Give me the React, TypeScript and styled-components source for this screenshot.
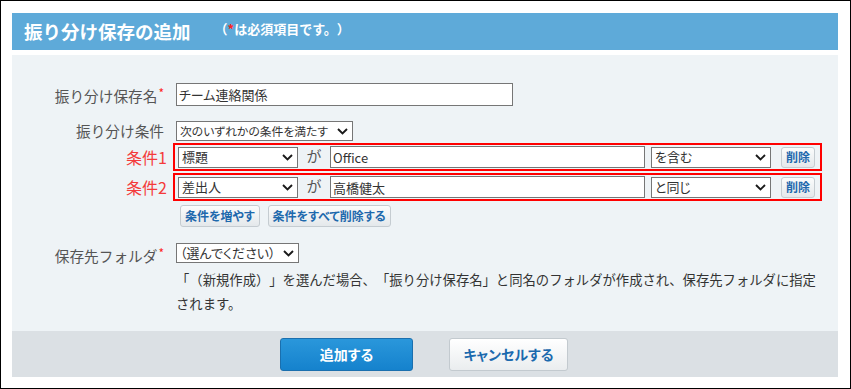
import React from "react";
import styled, { createGlobalStyle } from "styled-components";

const Global = createGlobalStyle`
  html, body { margin: 0; padding: 0; background: #fff; }
  body { font-family: "Noto Sans CJK JP", "Noto Sans", sans-serif; }
  *, *::before, *::after { box-sizing: border-box; }
`;

const Frame = styled.div`
  width: 851px;
  height: 389px;
  border: 1px solid #000;
  padding: 12px 12px 0 11px;
  background: #fff;
  display: flex;
  flex-direction: column;
`;

const Header = styled.div`
  height: 37px;
  background: #5eaad9;
  color: #fff;
  display: flex;
  align-items: center;
  padding-left: 12px;
`;

const Title = styled.h1`
  margin: 0;
  font-size: 18.5px;
  font-weight: 700;
  line-height: 1;
`;

const Note = styled.span`
  margin-left: 24px;
  font-size: 13px;
  font-weight: 700;
  line-height: 1;
  margin-top: -6px;
  text-spacing-trim: space-all;
`;

const Req = styled.span`
  color: #f22;
  font-weight: 700;
`;

const Panel = styled.div`
  margin-top: 5px;
  background: #eef3f6;
  height: 276px;
  padding-top: 28px;
  display: flex;
  flex-direction: column;
`;

const Row = styled.div<{ $mt?: number; $top?: boolean }>`
  display: flex;
  align-items: ${(p) => (p.$top ? "flex-start" : "center")};
  margin-top: ${(p) => p.$mt ?? 0}px;
`;

const Label = styled.div<{ $h?: number }>`
  width: 152px;
  margin-right: 12px;
  text-align: right;
  font-size: 14.67px;
  color: #555;
  line-height: ${(p) => (p.$h ? `${p.$h}px` : "20px")};
  white-space: nowrap;
`;

const Star = styled.span`
  color: #f22;
  font-size: 12px;
  vertical-align: 4px;
  margin-left: 1px;
`;

const CondLabel = styled.div`
  width: 155px;
  margin-right: 6px;
  text-align: right;
  font-size: 16px;
  color: #f43a3a;
  line-height: 20px;
`;

const TextInput = styled.input<{ $w?: number; $h?: number }>`
  width: ${(p) => (p.$w ? `${p.$w}px` : "auto")};
  flex: ${(p) => (p.$w ? "none" : "1")};
  min-width: 0;
  height: ${(p) => p.$h ?? 23}px;
  border: 1px solid #767676;
  background: #fff;
  padding: 0 2px;
  margin: 0;
  font-family: inherit;
  font-size: 13px;
  font-feature-settings: "palt";
  color: #333;
  outline: none;
`;

const SelectBox = styled.div<{ $w: number; $h: number; $fs?: number; $ml?: number }>`
  width: ${(p) => p.$w}px;
  height: ${(p) => p.$h}px;
  margin-left: ${(p) => p.$ml ?? 0}px;
  flex: none;
  border: 1px solid #767676;
  background: #fff;
  display: flex;
  align-items: center;
  justify-content: space-between;
  gap: 4px;
  padding: 0 4px 0 3px;
  font-size: ${(p) => p.$fs ?? 13}px;
  font-feature-settings: "palt";
  color: #333;
  white-space: nowrap;

  & > span {
    min-width: 0;
    line-height: 18px;
  }
  & > svg {
    flex: none;
  }
`;

const CondBox = styled.div`
  width: 649px;
  height: 28px;
  border: 2px solid #f00;
  padding: 0 5px 0 3px;
  display: flex;
  align-items: center;
`;

const Ga = styled.span`
  width: 32px;
  text-align: center;
  font-size: 15px;
  color: #555;
  line-height: 1;
  margin-top: -4px;
`;

const SmallButton = styled.button<{ $h?: number; $ml?: number }>`
  height: ${(p) => p.$h ?? 21}px;
  margin: 0 0 0 ${(p) => p.$ml ?? 0}px;
  padding: 0 4px;
  border: 1px solid #c5ccd1;
  border-radius: 3px;
  background: linear-gradient(#fbfcfc, #e4e8eb);
  color: #1e69ad;
  font-family: inherit;
  font-size: 12px;
  font-weight: 700;
  font-feature-settings: "palt";
  line-height: 1;
  white-space: nowrap;
  flex: none;
`;

const ButtonRow = styled.div`
  display: flex;
  gap: 8px;
  margin: 4px 0 0 168px;
`;

const Col = styled.div`
  display: flex;
  flex-direction: column;
`;

const Desc = styled.p`
  margin: 5px 0 0;
  width: 646px;
  font-size: 13.33px;
  line-height: 24px;
  color: #333;
  text-spacing-trim: space-all;
`;

const Footer = styled.div`
  height: 46px;
  background: #dbe0e4;
  display: flex;
  align-items: center;
  justify-content: center;
  gap: 36px;
  padding-right: 2px;
`;

const BigButton = styled.button<{ $primary?: boolean; $w: number }>`
  width: ${(p) => p.$w}px;
  height: 33px;
  margin: 0;
  border-radius: 3px;
  border: 1px solid ${(p) => (p.$primary ? "#1a6fae" : "#c3cacf")};
  background: ${(p) =>
    p.$primary
      ? "linear-gradient(#2a97db, #1582cd)"
      : "linear-gradient(#ffffff, #eaedef)"};
  color: ${(p) => (p.$primary ? "#fff" : "#1b6aae")};
  font-family: inherit;
  font-size: 14px;
  font-weight: 700;
  font-feature-settings: "palt";
  line-height: 1;
`;

const Chevron = () => (
  <svg width="11" height="7" viewBox="0 0 11 7" aria-hidden="true">
    <path d="M1 1 L5.5 5.5 L10 1" fill="none" stroke="#1a1a1a" strokeWidth="1.9" />
  </svg>
);

const Select = ({
  w,
  h,
  text,
  fs,
  ml,
}: {
  w: number;
  h: number;
  text: string;
  fs?: number;
  ml?: number;
}) => (
  <SelectBox $w={w} $h={h} $fs={fs} $ml={ml}>
    <span>{text}</span>
    <Chevron />
  </SelectBox>
);

const conditions = [
  { label: "条件1", field: "標題", value: "Office", op: "を含む" },
  { label: "条件2", field: "差出人", value: "高橋健太", op: "と同じ" },
];

export default function App() {
  return (
    <>
      <Global />
      <Frame>
        <Header>
          <Title>振り分け保存の追加</Title>
          <Note>
            （<Req>*</Req>は必須項目です。）
          </Note>
        </Header>
        <Panel>
          <Row>
            <Label>
              振り分け保存名<Star>*</Star>
            </Label>
            <TextInput $w={337} defaultValue="チーム連絡関係" />
          </Row>
          <Row $mt={15}>
            <Label>振り分け条件</Label>
            <Select w={177} h={20} fs={11.8} text="次のいずれかの条件を満たす" />
          </Row>
          {conditions.map((c) => (
            <Row key={c.label} $mt={2}>
              <CondLabel>{c.label}</CondLabel>
              <CondBox>
                <Select w={120} h={21} text={c.field} />
                <Ga>が</Ga>
                <TextInput $h={22} defaultValue={c.value} />
                <Select w={120} h={21} ml={6} text={c.op} />
                <SmallButton $ml={10}>削除</SmallButton>
              </CondBox>
            </Row>
          ))}
          <ButtonRow>
            <SmallButton $h={22}>条件を増やす</SmallButton>
            <SmallButton $h={22}>条件をすべて削除する</SmallButton>
          </ButtonRow>
          <Row $mt={16} $top>
            <Label $h={20}>
              保存先フォルダ<Star>*</Star>
            </Label>
            <Col>
              <Select w={123} h={20} text="（選んでください）" />
              <Desc>
                「（新規作成）」を選んだ場合、「振り分け保存名」と同名のフォルダが作成され、保存先フォルダに指定されます。
              </Desc>
            </Col>
          </Row>
        </Panel>
        <Footer>
          <BigButton $primary $w={133}>
            追加する
          </BigButton>
          <BigButton $w={119}>キャンセルする</BigButton>
        </Footer>
      </Frame>
    </>
  );
}
